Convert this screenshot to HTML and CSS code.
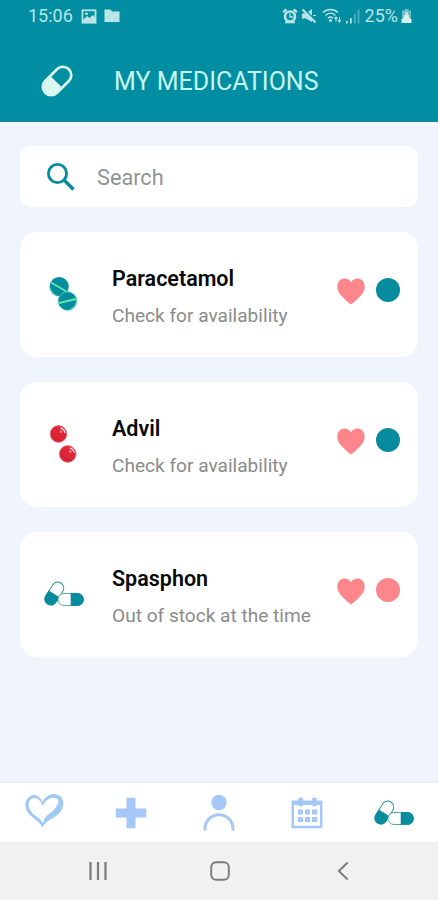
FILE: index.html
```html
<!DOCTYPE html>
<html lang="en">
<head>
<meta charset="utf-8">
<meta name="viewport" content="width=device-width">
<title>My Medications</title>
<link rel="stylesheet" href="styles.css">
</head>
<body>
<svg class="defs" width="0" height="0" aria-hidden="true">
  <symbol id="heart" viewBox="0 0 28 27"><path fill="#fc868c" d="M14 4.200C16.500-.2 22-.4 25 2c3.500 3.500 3.500 9 .6 13.200C23 19 19 22.500 14 26.500 9 22.500 5 19 2.400 15.200-.5 11-.5 5.500 3 2 6-.4 11.500-.2 14 4.200z"/></symbol>
  <symbol id="capsules" viewBox="0 0 40 26">
    <g transform="rotate(-58 10.300 12.600)">
      <rect x="-2.200" y="6.600" width="25" height="12" rx="6" fill="#fff" stroke="#278f98" stroke-width=".9"/>
      <path d="M10 6.200H4a6.400 6.400 0 0 0 0 12.800h6z" fill="#078c9f"/>
    </g>
    <rect x="14" y="12.500" width="25.300" height="12" rx="6" fill="#fff" stroke="#4aa096" stroke-width=".9"/>
    <path d="M26.700 12.100h6.800a6.300 6.300 0 0 1 0 12.700h-6.800z" fill="#078c9f"/>
  </symbol>
</svg>
<div class="app">
  <div class="status">
    <span class="status-text">15:06</span>
    <svg class="s-image" width="16" height="15" viewBox="0 0 16 15"><rect x="1.500" y="1.300" width="13" height="12.400" fill="none" stroke="#b9e5e7" stroke-width="1.800"/><path fill="#b9e5e7" d="M2 11l4-4 2.500 2L12 6l2.500 3v4.500H2z"/><circle cx="5.500" cy="4.800" r="1.400" fill="#b9e5e7"/></svg>
    <svg class="s-folder" width="16" height="14" viewBox="0 0 16 14"><path fill="#b9e5e7" d="M.5.500h6L8 2.500h7.500V13H.5z"/></svg>
    <div class="status-right">
      <svg width="16" height="16" viewBox="0 0 16 16"><g fill="none" stroke="#b9e5e7"><circle cx="8" cy="8.500" r="5" stroke-width="2.600"/><path d="M1 4l3.500-2.500M15 4l-3.500-2.500" stroke-width="2.200"/><path d="M3 14.300h10" stroke-width="2"/><path d="M8 5.500V9h3" stroke-width="1.300"/></g></svg>
      <svg class="s-mute" width="16" height="16" viewBox="0 0 16 16"><path fill="#b9e5e7" d="M1 5.500h4l6-4.500v13L5 10.500H1z"/><path d="M2.800.6l12.700 12.700" stroke="#028ea2" stroke-width="1.400"/><path d="M1.500 1.500l13 13" stroke="#b9e5e7" stroke-width="1.900"/><path d="M12 7.500h3" stroke="#b9e5e7"/></svg>
      <svg class="s-wifi" width="20" height="16" viewBox="0 0 20 16"><g fill="none" stroke="#b9e5e7" stroke-width="1.400"><path d="M1 4.500c4-4 11-4 15 0M3.500 7.500c3-3 7-3 10 0M5.800 10.200c2-1.700 3.500-1.700 5.300 0"/></g><circle cx="8.500" cy="12.500" r="1.500" fill="#b9e5e7"/><path fill="#b9e5e7" d="M12 11l2-3 2 3zM15.500 12h4l-2 3zM13.500 11h1v3h-1zM17 9h1v3h-1z"/></svg>
      <svg class="s-signal" width="14" height="15" viewBox="0 0 14 15"><g fill="#b9e5e7"><path d="M0 12h1.700v2.500H0zM4 9h1.700v5.500H4z"/><path opacity=".45" d="M8 5h1.700v9.500H8zM11.700.5h1.700v14h-1.700z"/></g></svg>
      <span class="status-text s-percent">25%</span>
      <svg class="s-battery" width="11" height="16" viewBox="0 0 11 16"><path fill="#6fbfca" d="M3.500 1h4v1.500H10V15H1V2.500h2.500z"/><path fill="#d7f1ef" d="M4.500 4h2v3H8v3l2.500 1v4H.5v-4L3 10V7h1.500z"/></svg>
    </div>
  </div>
  <header class="header">
    <svg width="34" height="34" viewBox="0 0 34 34"><g transform="rotate(-45 17 17)"><rect x=".3" y="8.600" width="33.400" height="16.800" rx="8.400" fill="none" stroke="#d9f8ee" stroke-width="2.700"/><path fill="#d9f8ee" d="M16 9.500v15H9a7.500 7.500 0 0 1 0-15z"/></g></svg>
    <h1>MY MEDICATIONS</h1>
  </header>
  <main class="content">
    <label class="search">
      <svg width="30" height="30" viewBox="0 0 30 30"><g fill="none" stroke="#078c9f"><circle cx="11.500" cy="11.500" r="9.100" stroke-width="2.900"/><path d="M18 18l9.500 9.500" stroke-width="3.500"/></g></svg>
      <span>Search</span>
    </label>
    <article class="card">
      <div class="thumb thumb-round"><svg width="28" height="34" viewBox="0 0 28 34"><circle cx="10.200" cy="9.600" r="9.600" fill="#078c9f"/><path d="M2 5.500l15.500 9" stroke="#5ce6ac" stroke-width="2"/><path d="M.8 11q2 6 8 8" stroke="#5ce6ac" stroke-width=".8" fill="none"/><circle cx="18.500" cy="24" r="9.300" fill="#078c9f" stroke="#44d9ab" stroke-width=".8"/><path d="M10 26l17-4" stroke="#5ce6ac" stroke-width="2.200"/><path d="M27.400 22q.5 8-6 10" stroke="#5ce6ac" fill="none"/></svg></div>
      <div class="info"><h2>Paracetamol</h2><p>Check for availability</p></div>
      <svg class="fav" width="28" height="27"><use href="#heart"/></svg>
      <span class="dot"></span>
    </article>
    <article class="card">
      <div class="thumb thumb-round"><svg width="28" height="38" viewBox="0 0 28 38"><g fill="#de2638" stroke="#ee7b84" stroke-width=".8"><circle cx="9.500" cy="9" r="8.400"/><circle cx="18.700" cy="29" r="8.400"/></g><g fill="none" stroke="#b41b31" stroke-width="1"><path d="M3 6.500q1 8 9 9M12.200 26.500q1 8 9 9"/></g><g fill="none" stroke="#ffd8dc" stroke-width="1.300"><path d="M11.500 3q4 1 4.500 5M20.700 23q4 1 4.500 5"/></g><g fill="#f0707b"><circle cx="12" cy="6.500" r="1.500"/><circle cx="21.200" cy="26.500" r="1.500"/></g></svg></div>
      <div class="info"><h2 class="advil">Advil</h2><p>Check for availability</p></div>
      <svg class="fav" width="28" height="27"><use href="#heart"/></svg>
      <span class="dot"></span>
    </article>
    <article class="card">
      <div class="thumb"><svg width="40" height="26"><use href="#capsules"/></svg></div>
      <div class="info"><h2>Spasphon</h2><p>Out of stock at the time</p></div>
      <svg class="fav" width="28" height="27"><use href="#heart"/></svg>
      <span class="dot dot-out"></span>
    </article>
  </main>
  <nav class="tabs">
    <svg class="tab-heart" width="40" height="36" viewBox="0 0 40 36"><path fill="#9fc8f4" fill-rule="evenodd" d="M18.500 9C15 1 9 .5 5 4-2 11 2 20 10 25.500c4.500 3 7 5.500 8.500 9.500 1-4 5-7 9.500-9.500C36 21 40.500 15 39 8 37-1 23-1 18.500 9zM18.500 13C16 5 9.500 3 6.500 6.500 2 12 6 19 12 23c3.500 2.300 5.500 4.500 6.700 7.200.8-2.200 2-3.900 4.300-5.700C29 20 33 16.500 34.300 11c1-5-2-7-5-6.200-5 .6-8.300 3.500-10.800 8.200z"/><path fill="#9fc8f4" d="M33.500 8.500c0 5-3.500 8.500-6.500 11-4 3-6.500 5-7.500 8.500 3-3 6-4 9-6.500 4-3.500 6-7.500 5-13z"/></svg>
    <svg width="32" height="32" viewBox="0 0 32 32"><path fill="#a6c8f8" d="M11.500.8h9v10.700H31.300v9H20.500v10.700h-9V20.500H.7v-9h10.800z"/></svg>
    <svg width="32" height="38" viewBox="0 0 32 38"><circle cx="16" cy="8.500" r="7.700" fill="#a6c8f8"/><path d="M2 36.500v-1.800a14 14 0 0 1 28 0v1.800" fill="none" stroke="#a6c8f8" stroke-width="3"/></svg>
    <svg width="32" height="32" viewBox="0 0 32 32"><rect x="1.800" y="4.800" width="28.400" height="25.200" fill="none" stroke="#a6c8f8" stroke-width="2.500"/><g fill="#a6c8f8"><path d="M1 4h30v4H1z"/><rect x="7" y=".5" width="5.500" height="9" rx="2.700"/><rect x="20.500" y=".5" width="5.500" height="9" rx="2.700"/><path d="M7 12.500h5v5H7zM14 12.500h5v5h-5zM21 12.500h5v5h-5zM7 20h5v5H7zM14 20h5v5h-5zM21 20h5v5h-5z"/></g></svg>
    <svg width="40" height="26"><use href="#capsules"/></svg>
  </nav>
  <div class="sysbar">
    <svg width="20" height="20" viewBox="0 0 20 20"><path d="M2.500 1v18M10 1v18M17.500 1v18" stroke="#7b7b7b" stroke-width="2.200"/></svg>
    <svg width="20" height="20" viewBox="0 0 20 20"><rect x="1.200" y="1.200" width="17.600" height="17.600" rx="5" fill="none" stroke="#7b7b7b" stroke-width="1.900"/></svg>
    <svg width="20" height="20" viewBox="0 0 20 20"><path d="M14.700 1.500L5.800 10l8.900 8.500" fill="none" stroke="#7b7b7b" stroke-width="1.900"/></svg>
  </div>
</div>
</body>
</html>
```
FILE: styles.css
```css
* { box-sizing: border-box; }
body { margin: 0; font-family: Roboto, "Liberation Sans", sans-serif; }
h1, h2, p { margin: 0; font-weight: 400; white-space: nowrap; }
svg { display: block; flex: none; }
.defs { position: absolute; }
.app { display: flex; flex-direction: column; width: 438px; height: 900px; background: #f0f5fd; }

.status { display: flex; align-items: center; height: 32px; padding: 0 26px 0 28px; background: #028ea2; color: #b9e5e7; }
.status-text { font-size: 18px; line-height: 32px; }
.s-image { margin-left: 8px; }
.s-folder { margin-left: 7px; }
.status-right { display: flex; align-items: center; margin-left: auto; }
.s-mute { margin-left: 3px; }
.s-wifi { margin-left: 5px; }
.s-signal { margin-left: 4px; }
.s-percent { margin-left: 5px; }
.s-battery { margin-left: 3px; }

.header { display: flex; align-items: center; height: 90px; padding: 9px 0 0 40px; background: #028ea2; border-bottom: 1px solid #178296; }
.header h1 { margin-left: 40px; padding-top: 2px; font-size: 25px; line-height: 30px; color: #c5f5ef; }

.content { display: flex; flex-direction: column; flex: 1; padding: 24px 20px 0; gap: 25px; }
.search { display: flex; align-items: center; height: 61px; padding-left: 26px; border-radius: 11px; background: #fff; }
.search span { margin-left: 21px; padding-top: 2px; font-size: 21.700px; color: #8f9395; }
.card { display: flex; align-items: flex-start; height: 125px; padding-right: 18px; border-radius: 17px; background: #fff; }
.thumb { display: flex; align-items: center; justify-content: center; width: 88px; height: 123px; }
.thumb-round { padding-right: 3px; }
.info { flex: 1; padding: 33px 0 0 4px; }
.info h2 { font-size: 21.500px; line-height: 27px; font-weight: 600; color: #090909; }
.info p { margin-top: 12px; font-size: 19.100px; line-height: 24px; color: #8b8b8b; }
.fav { margin: 46px 11px 0 0; }
.dot { width: 24px; height: 24px; margin-top: 46px; border-radius: 50%; background: #078c9f; }
.dot-out { background: #fc868c; }

.tabs { display: grid; grid-template-columns: repeat(5, 1fr); place-items: center; height: 61px; border-top: 2px solid #e8edf4; background: #fff; }
.tab-heart { margin-bottom: 3px; }
.sysbar { display: grid; grid-template-columns: repeat(3, 122.5px); place-content: center; place-items: center; height: 58px; padding-left: 2px; background: #f1f1f1; }
```
